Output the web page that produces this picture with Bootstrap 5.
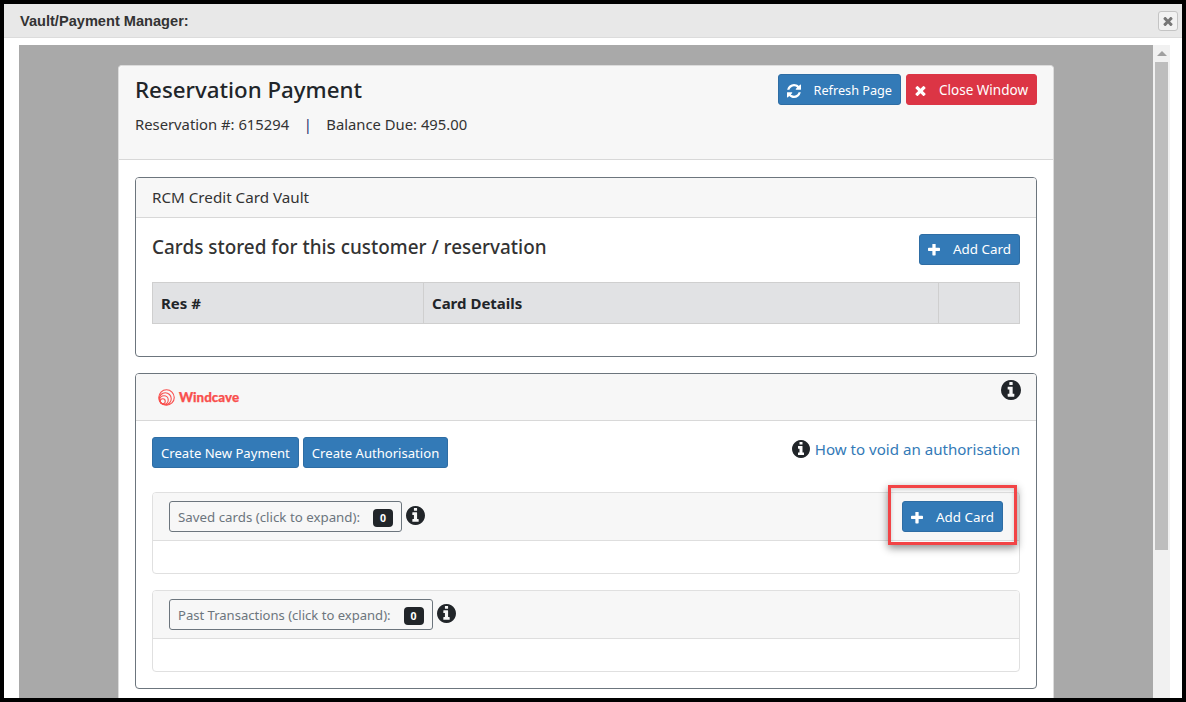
<!DOCTYPE html>
<html lang="en">
<head>
<meta charset="utf-8">
<title>Vault/Payment Manager</title>
<link href="https://cdn.jsdelivr.net/npm/bootstrap@5.3.0/dist/css/bootstrap.min.css" rel="stylesheet">
<style>
html,body{height:702px;overflow:hidden}
body{background:#000;padding:4px;font-family:"Noto Sans",sans-serif;font-size:14px;color:#212529}
.win{height:694px;background:#fff;display:flex;flex-direction:column;overflow:hidden}
.win-bar{height:34px;flex:none;background:#e8e8e8;border-bottom:1px solid #dcdcdc;padding:1px 4px 1px 16px;display:flex;align-items:center;justify-content:space-between;font:bold 14.6px "Liberation Sans",sans-serif;color:#333}
.win-x{width:20px;height:20px;border:1px solid #c4c4c4;border-radius:3px;background:#f2f2f2;color:#777;display:flex;align-items:center;justify-content:center;padding:0;margin-top:1px}
.win-main{flex:1;min-height:0;display:flex;padding:7px 12px 0 15px}
.shade{flex:1;min-width:0;background:#a9a9a9;padding:20px 99px 0;overflow:hidden}
.sbar{width:17px;flex:none;background:#f1f1f1;display:flex;flex-direction:column;align-items:center;padding-top:6px}
.sbar i{display:block;width:0;height:0;border:5px solid transparent;border-top:0;border-bottom:5px solid #a0a0a0;margin-bottom:6px}
.sbar b{display:block;width:13px;height:488px;background:#bdbdbd}
.pay-card{--bs-card-border-color:#dcdcdc;border-radius:4px;border-bottom:0}
.pay-head{height:94px;background:#f7f7f7;padding:8px 16px;display:flex;justify-content:space-between;align-items:flex-start;border-color:#d8d8d8}
.pay-title{font-size:22.3px;font-weight:500;margin:0;line-height:32px;color:#212529}
.pay-sub{margin:7px 0 0;line-height:22px;font-size:14.8px;color:#333}
.pay-sub span{color:#1a2a6c;margin:0 14.5px}
.pay-btns{gap:5px}
.pay-btns .btn{padding-top:5px;padding-bottom:3px}
.pay-body{padding:17px 16px}
.btnx{--bs-btn-font-size:13.1px;--bs-btn-padding-x:8px;--bs-btn-padding-y:4px;--bs-btn-border-radius:3px;--bs-btn-line-height:21px;display:inline-flex;align-items:center;color:#fff}
.btn-primary.btnx{--bs-btn-bg:#337ab7;--bs-btn-border-color:#2e6da4}
.btn-danger.btnx{--bs-btn-bg:#dc3545;--bs-btn-border-color:#dc3545}
.btn-refresh{--bs-btn-font-size:12.7px}
.btn-refresh .ico{margin-right:12px}
.btn-danger.btnx{--bs-btn-font-size:13.5px}
.btnx .ico{margin-right:13px}
.ico{fill:currentColor;flex:none;display:block}
.add-btn{width:101px;justify-content:center;--bs-btn-font-size:13.4px}
.outer{--bs-card-border-color:#6c757d;--bs-card-border-radius:4px;--bs-card-inner-border-radius:3px;margin-bottom:16px}
.outer>.card-header{background:#f7f7f7;border-color:#d8d8d8;padding:0 16px}
.vault-head{height:40px;line-height:39px;font-size:15.2px;color:#333}
.vault-body{padding:16px;height:138px}
.vault-row{display:flex;justify-content:space-between;align-items:flex-start;height:48px}
.vault-h{font-size:18.9px;font-weight:500;margin:0;line-height:26px;color:#333}
.tbl{margin:0;border-color:#cfcfcf;--bs-table-bg:#e1e2e4;font-size:15px}
.tbl th{height:41px;padding:0 8px;vertical-align:middle;font-weight:700;color:#212529}
.wc-head{height:47px;position:relative}
.wc-head .info{position:absolute;right:15px;top:6px}
.wc-logo{display:flex;align-items:center;gap:4px;height:46px;padding-left:6px;color:#f9504e;font-weight:900;font-size:13.4px;font-family:Lato,sans-serif;-webkit-text-stroke:.25px #f9504e}
.wc-body{padding:16px}
.wc-body .btn{padding-top:5px;padding-bottom:3px}
.wc-acts{display:flex;justify-content:space-between;align-items:flex-start;margin-bottom:24px;height:31px}
.wc-acts .gapx{display:flex;gap:4px}
.wc-link{display:flex;align-items:center;gap:5px;font-size:15.1px;color:#337ab7;text-decoration:none;line-height:24px}
.sub{--bs-card-border-color:#e0e0e0;--bs-card-border-radius:4px;--bs-card-inner-border-radius:3px;height:82px;margin-bottom:16px}
.sub:last-child{margin-bottom:0}
.sub>.card-header{height:48px;background:#f7f7f7;border-color:#dedede;padding:8px 16px;display:flex;align-items:flex-start;justify-content:space-between}
.sub-l{display:flex;align-items:flex-start;gap:4px}
.xpand{--bs-btn-font-size:13.3px;--bs-btn-padding-x:8px;--bs-btn-padding-y:4px;--bs-btn-color:#6c757d;--bs-btn-border-color:#6c757d;--bs-btn-border-radius:3px;--bs-btn-line-height:21px;display:inline-flex;align-items:center;gap:13px}
.xpand-past{--bs-btn-font-size:13.05px}
.cnt{background:#212529;color:#fff;font-size:10.5px;font-weight:700;width:20px;height:18px;line-height:18px;border-radius:4px;padding:0;display:block;text-align:center}
.sub-inf{color:#212529;margin-top:5px}
.hl-wrap{position:relative}
.hl{position:absolute;right:-14px;top:-16px;width:129px;height:60px;border:3px solid #f24446;box-shadow:0 3px 8px rgba(0,0,0,.45),inset 0 2px 4px rgba(0,0,0,.18);pointer-events:none}
</style>
</head>
<body>
<svg width="0" height="0" class="position-absolute">
<symbol id="i-info" viewBox="128 128 1536 1536"><path fill-rule="evenodd" d="M1152 1376v-160q0-14-9-23t-23-9h-96v-512q0-14-9-23t-23-9h-320q-14 0-23 9t-9 23v160q0 14 9 23t23 9h96v320h-96q-14 0-23 9t-9 23v160q0 14 9 23t23 9h448q14 0 23-9t9-23zm-128-896v-160q0-14-9-23t-23-9h-192q-14 0-23 9t-9 23v160q0 14 9 23t23 9h192q14 0 23-9t9-23zm640 416q0 209-103 385.5t-279.5 279.5-385.5 103-385.5-103-279.5-279.5-103-385.5 103-385.5 279.5-279.5 385.5-103 385.5 103 279.5 279.5 103 385.5z"/></symbol>
<symbol id="i-plus" viewBox="192 192 1408 1408"><path d="M1600 736v192q0 40-28 68t-68 28h-416v416q0 40-28 68t-68 28h-192q-40 0-68-28t-28-68v-416h-416q-40 0-68-28t-28-68v-192q0-40 28-68t68-28h416v-416q0-40 28-68t68-28h192q40 0 68 28t28 68v416h416q40 0 68 28t28 68z"/></symbol>
<symbol id="i-x" viewBox="250 250 1292 1292"><path d="M1490 1322q0 40-28 68l-136 136q-28 28-68 28t-68-28l-294-294-294 294q-28 28-68 28t-68-28l-136-136q-28-28-28-68t28-68l294-294-294-294q-28-28-28-68t28-68l136-136q28-28 68-28t68 28l294 294 294-294q28-28 68-28t68 28l136 136q28 28 28 68t-28 68l-294 294 294 294q28 28 28 68z"/></symbol>
<symbol id="i-ref" viewBox="128 128 1536 1536"><path d="M1639 1056q0 5-1 7-64 268-268 434.5t-478 166.5q-146 0-282.5-55t-243.5-157l-129 129q-19 19-45 19t-45-19-19-45v-448q0-26 19-45t45-19h448q26 0 45 19t19 45-19 45l-137 137q71 66 161 102t187 36q134 0 250-65t186-179q11-17 53-117 8-23 30-23h192q13 0 22.5 9.5t9.5 22.5zm25-800v448q0 26-19 45t-45 19h-448q-26 0-45-19t-19-45 19-45l138-138q-148-137-349-137-134 0-250 65t-186 179q-11 17-53 117-8 23-30 23h-199q-13 0-22.5-9.5t-9.5-22.5v-7q65-268 270-434.5t480-166.5q146 0 284 55.5t245 156.5l130-129q19-19 45-19t45 19 19 45z"/></symbol>
</svg>
<div class="win">
  <div class="win-bar">
    <span>Vault/Payment Manager:</span>
    <button class="win-x" type="button" aria-label="Close"><svg class="ico" width="10" height="10"><use href="#i-x"/></svg></button>
  </div>
  <div class="win-main">
    <div class="shade">
      <div class="card pay-card">
        <div class="card-header pay-head">
          <div>
            <h1 class="pay-title">Reservation Payment</h1>
            <p class="pay-sub">Reservation #: 615294<span>|</span>Balance Due: 495.00</p>
          </div>
          <div class="d-flex pay-btns">
            <button class="btn btn-primary btnx btn-refresh" type="button"><svg class="ico" width="14" height="14"><use href="#i-ref"/></svg>Refresh Page</button>
            <button class="btn btn-danger btnx" type="button"><svg class="ico" width="11" height="11"><use href="#i-x"/></svg>Close Window</button>
          </div>
        </div>
        <div class="card-body pay-body">
          <div class="card outer">
            <div class="card-header vault-head">RCM Credit Card Vault</div>
            <div class="card-body vault-body">
              <div class="vault-row">
                <h2 class="vault-h">Cards stored for this customer / reservation</h2>
                <button class="btn btn-primary btnx add-btn" type="button"><svg class="ico" width="12" height="12"><use href="#i-plus"/></svg>Add Card</button>
              </div>
              <table class="table table-bordered tbl">
                <thead><tr><th style="width:271px">Res #</th><th>Card Details</th><th style="width:81px"></th></tr></thead>
              </table>
            </div>
          </div>
          <div class="card outer">
            <div class="card-header wc-head">
              <div class="wc-logo">
                <svg width="17" height="17" viewBox="0 0 34 34" fill="none" stroke="#f9504e" stroke-width="2.2"><circle cx="17" cy="17" r="15.5"/><circle cx="14.5" cy="19.5" r="12"/><circle cx="12" cy="22" r="8.5"/><circle cx="9.5" cy="24.5" r="5"/></svg>
                <span>Windcave</span>
              </div>
              <svg class="ico info" width="20" height="20"><use href="#i-info"/></svg>
            </div>
            <div class="card-body wc-body">
              <div class="wc-acts">
                <div class="gapx">
                  <button class="btn btn-primary btnx" type="button">Create New Payment</button>
                  <button class="btn btn-primary btnx" type="button">Create Authorisation</button>
                </div>
                <a class="wc-link" href="#"><svg class="ico text-dark" width="18" height="18"><use href="#i-info"/></svg>How to void an authorisation</a>
              </div>
              <div class="card sub">
                <div class="card-header">
                  <div class="sub-l">
                    <button class="btn btn-outline-secondary xpand" type="button">Saved cards (click to expand): <span class="cnt">0</span></button>
                    <svg class="ico sub-inf" width="19" height="19"><use href="#i-info"/></svg>
                  </div>
                  <div class="hl-wrap">
                    <button class="btn btn-primary btnx add-btn" type="button"><svg class="ico" width="12" height="12"><use href="#i-plus"/></svg>Add Card</button>
                    <div class="hl"></div>
                  </div>
                </div>
              </div>
              <div class="card sub">
                <div class="card-header">
                  <div class="sub-l">
                    <button class="btn btn-outline-secondary xpand xpand-past" type="button">Past Transactions (click to expand): <span class="cnt">0</span></button>
                    <svg class="ico sub-inf" width="19" height="19"><use href="#i-info"/></svg>
                  </div>
                </div>
              </div>
            </div>
          </div>
        </div>
      </div>
    </div>
    <div class="sbar"><i></i><b></b></div>
  </div>
</div>
</body>
</html>
